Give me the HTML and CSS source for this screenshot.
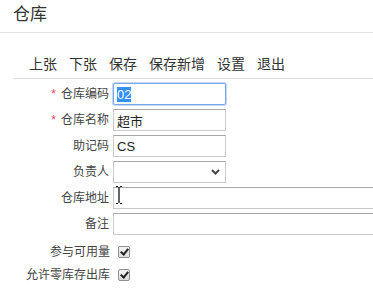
FILE: index.html
```html
<!doctype html>
<html lang="zh">

<head>
    <meta charset="utf-8">
    <title>仓库</title>
    <link rel="stylesheet" href="styles.css">
</head>

<body>
    <div class="page">
        <div class="title">仓库</div>
        <div class="toolbar">
            <span class="tool">上张</span>
            <span class="tool">下张</span>
            <span class="tool">保存</span>
            <span class="tool">保存新增</span>
            <span class="tool">设置</span>
            <span class="tool">退出</span>
        </div>
        <form class="form">
            <div class="row">
                <label class="label"><i class="req">*</i>仓库编码</label>
                <input class="field field-short code" type="text" value="02" autofocus>
            </div>
            <div class="row">
                <label class="label"><i class="req">*</i>仓库名称</label>
                <input class="field field-short" type="text" value="超市">
            </div>
            <div class="row">
                <label class="label">助记码</label>
                <input class="field field-short" type="text" value="CS">
            </div>
            <div class="row">
                <label class="label">负责人</label>
                <div class="select-wrap">
                    <select class="field field-short select"><option></option></select>
                    <svg class="chevron" width="9" height="6" viewBox="0 0 9 6">
                        <path d="M1 1 L4.5 4.5 L8 1" fill="none" stroke="#444" stroke-width="2"/>
                    </svg>
                </div>
            </div>
            <div class="row">
                <label class="label">仓库地址</label>
                <div class="wide-wrap">
                    <input class="field field-wide" type="text">
                    <svg class="ibeam" width="8" height="18" viewBox="0 0 8 18">
                        <path d="M1 0.5 H3 M5 0.5 H7 M4 1 V17 M1 17.5 H3 M5 17.5 H7" fill="none" stroke="#000" stroke-width="1.2"/>
                    </svg>
                </div>
            </div>
            <div class="row">
                <label class="label">备注</label>
                <input class="field field-wide" type="text">
            </div>
            <div class="check-row first">
                <label class="label">参与可用量</label>
                <input class="check" type="checkbox" checked>
            </div>
            <div class="check-row">
                <label class="label">允许零库存出库</label>
                <input class="check" type="checkbox" checked>
            </div>
        </form>
    </div>
    <script>
    document.addEventListener("DOMContentLoaded", function() {
        var code = document.querySelector('.code')
        code.focus()
        code.select()
    });
    </script>
</body>

</html>
```

FILE: styles.css
```css
html,
body {
    margin: 0;
    padding: 0;
    background: #fff;
    overflow: hidden;
    font-family: "Liberation Sans", "Noto Sans CJK SC", sans-serif;
    color: #333;
}

.title {
    height: 32px;
    line-height: 30px;
    padding-left: 13px;
    font-size: 17px;
    border-bottom: 1px solid #e2e2e2;
}

.toolbar {
    display: flex;
    gap: 12px;
    margin-left: 13px;
    padding: 20px 0 3px 16px;
    line-height: 22px;
    font-size: 14px;
    border-bottom: 1px solid #dedede;
}

.form {
    margin: 4px 0 0 0;
}

.row {
    display: flex;
    align-items: center;
    height: 22px;
    margin-bottom: 4px;
}

.label {
    width: 113px;
    padding-right: 4px;
    box-sizing: border-box;
    text-align: right;
    font-size: 12px;
    line-height: 16px;
    color: #444;
    flex-shrink: 0;
}

.req {
    font-style: normal;
    color: #e8455a;
    margin-right: 5px;
}

.field {
    box-sizing: border-box;
    height: 22px;
    margin: 0;
    padding: 0 3px;
    border: 1px solid #c9c9c9;
    border-top-color: #a8a8a8;
    border-radius: 0;
    background: #fff;
    font-family: "Liberation Sans", "Noto Sans CJK SC", sans-serif;
    font-size: 13px;
    color: #222;
    outline: none;
}

.field-short {
    width: 113px;
}

.field-wide {
    width: 260px;
    border-right: 0;
}

.code:focus {
    border: 1px solid #7aa7ea;
    border-radius: 2px;
    box-shadow: 0 0 0 1px #c5d9f7;
}

.code::selection {
    background: #3390ff;
    color: #fff;
}

.select-wrap,
.wide-wrap {
    position: relative;
    display: flex;
}

.select {
    appearance: none;
    -webkit-appearance: none;
}

.chevron {
    position: absolute;
    right: 6px;
    top: 8px;
    pointer-events: none;
}

.ibeam {
    position: absolute;
    left: 2px;
    top: -1px;
    pointer-events: none;
}

.check-row {
    display: flex;
    align-items: center;
    height: 20px;
    margin-bottom: 3px;
}

.check-row.first {
    margin-top: 7px;
}

.check-row .label {
    padding-right: 0;
    width: 110px;
}

.check {
    appearance: none;
    -webkit-appearance: none;
    position: relative;
    box-sizing: border-box;
    width: 12px;
    height: 12px;
    margin: 0 0 0 8px;
    border: 1px solid #8f8f8f;
    border-radius: 2px;
    background: linear-gradient(#f4f4f4, #dcdcdc);
}

.check:checked::after {
    content: "";
    position: absolute;
    left: 3px;
    top: 0px;
    width: 3px;
    height: 6px;
    border: solid #222;
    border-width: 0 2px 2px 0;
    transform: rotate(40deg);
}
```
